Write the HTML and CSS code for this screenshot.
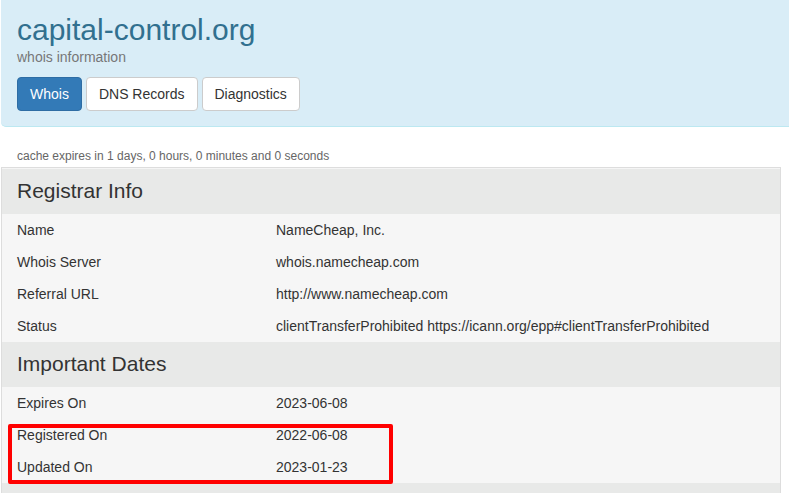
FILE: index.html
```html
<!DOCTYPE html>
<html lang="en">
<head>
    <meta charset="UTF-8">
    <meta name="viewport" content="width=device-width, initial-scale=1.0">
    <title>capital-control.org whois information</title>
    <link rel="stylesheet" href="styles.css">
</head>
<body>

<!-- Header -->
<div class="jumbotron">
    <h1 class="domain">capital-control.org</h1>
    <div class="subtitle">whois information</div>
    <div class="tabs">
        <a class="btn btn-active">Whois</a>
        <a class="btn">DNS Records</a>
        <a class="btn">Diagnostics</a>
    </div>
</div>

<div class="cache-note">cache expires in 1 days, 0 hours, 0 minutes and 0 seconds</div>

<!-- Whois panel -->
<div class="panel">
    <div class="panel-heading">Registrar Info</div>
    <div class="row"><span>Name</span><span>NameCheap, Inc.</span></div>
    <div class="row"><span>Whois Server</span><span>whois.namecheap.com</span></div>
    <div class="row"><span>Referral URL</span><span>http://www.namecheap.com</span></div>
    <div class="row"><span>Status</span><span>clientTransferProhibited https://icann.org/epp#clientTransferProhibited</span></div>

    <div class="panel-heading">Important Dates</div>
    <div class="row"><span>Expires On</span><span>2023-06-08</span></div>
    <div class="row"><span>Registered On</span><span>2022-06-08</span></div>
    <div class="row"><span>Updated On</span><span>2023-01-23</span></div>

    <!-- next section starts just below the fold -->
    <div class="panel-heading panel-heading-cut"></div>
</div>

<!-- Highlight box drawn over the dates -->
<div class="highlight"></div>

</body>
</html>
```

FILE: styles.css
```css
body {
    margin: 0;
    font-family: "Liberation Sans", Arial, sans-serif;
    font-size: 14px;
    color: #333;
    background-color: #fff;
    overflow: hidden;
    position: relative;
}

.jumbotron {
    margin-left: 1px;
    background-color: #d9edf7;
    border-bottom: 1px solid #bce8f1;
    border-radius: 0 0 0 5px;
    padding: 13px 16px 15px 16px;
}

.domain {
    margin: 0;
    font-size: 30px;
    font-weight: normal;
    line-height: 33px;
    color: #31708f;
}

.subtitle {
    margin-top: 1px;
    line-height: 20px;
    color: #777;
}

.tabs {
    display: flex;
    gap: 4px;
    margin-top: 10px;
}

.btn {
    display: inline-block;
    padding: 6px 12px;
    line-height: 20px;
    border: 1px solid #ccc;
    border-radius: 4px;
    background-color: #fff;
    color: #333;
    cursor: pointer;
}

.btn-active {
    background-color: #337ab7;
    border-color: #2e6da4;
    color: #fff;
}

.cache-note {
    margin: 21px 0 0 17px;
    font-size: 12px;
    line-height: 17px;
    color: #666;
}

.panel {
    margin: 2px 0 0 1px;
    width: 778px;
    border: 1px solid #ddd;
    border-bottom: none;
    padding-top: 1px;
    background-color: #f5f5f5;
}

.panel-heading {
    height: 45px;
    line-height: 43px;
    padding-left: 15px;
    font-size: 21px;
    background-color: #e8e9e8;
    color: #333;
}

.panel-heading-cut {
    height: 12px;
}

.row {
    display: grid;
    grid-template-columns: 259px 1fr;
    height: 32px;
    line-height: 32px;
    padding-left: 15px;
    background-color: #f6f6f6;
}

.highlight {
    position: absolute;
    left: 8px;
    top: 424px;
    width: 377px;
    height: 52px;
    border: 4px solid #ff0000;
    border-radius: 2px;
}
```
